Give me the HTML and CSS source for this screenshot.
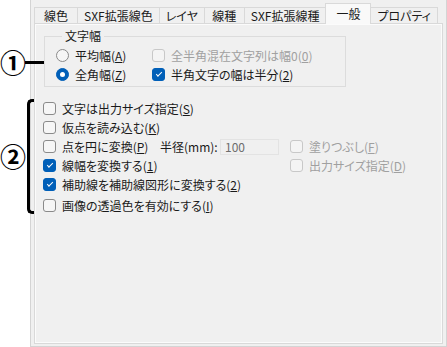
FILE: index.html
```html
<!DOCTYPE html>
<html lang="ja">
<head>
  <meta charset="UTF-8" />
  <title>一般設定</title>
  <link rel="stylesheet" href="styles.css">
</head>
<body>

<div class="screen">
  <div class="note note-one">
    <span class="num">①</span>
    <span class="leader"></span>
  </div>
  <div class="note note-two">
    <span class="num">②</span>
    <span class="bracket"></span>
  </div>

  <div class="dialog">
    <div class="tabs">
      <div class="tab first">線色</div>
      <div class="tab">SXF拡張線色</div>
      <div class="tab">レイヤ</div>
      <div class="tab">線種</div>
      <div class="tab">SXF拡張線種</div>
      <div class="tab active">一般</div>
      <div class="tab">プロパティ</div>
    </div>

    <div class="panel">
      <fieldset class="group">
        <legend>文字幅</legend>
        <div class="radios">
          <label class="opt"><span class="radio"></span><span>平均幅(<u>A</u>)</span></label>
          <label class="opt disabled"><span class="box"></span><span>全半角混在文字列は幅0(<u>0</u>)</span></label>
          <label class="opt"><span class="radio on"></span><span>全角幅(<u>Z</u>)</span></label>
          <label class="opt"><span class="box on"></span><span>半角文字の幅は半分(<u>2</u>)</span></label>
        </div>
      </fieldset>

      <div class="options">
        <label class="opt wide"><span class="box"></span><span>文字は出力サイズ指定(<u>S</u>)</span></label>
        <label class="opt wide"><span class="box"></span><span>仮点を読み込む(<u>K</u>)</span></label>

        <label class="opt"><span class="box"></span><span>点を円に変換(<u>P</u>)</span></label>
        <span class="field-label">半径(mm):</span>
        <span class="input">100</span>
        <label class="opt disabled"><span class="box"></span><span>塗りつぶし(<u>F</u>)</span></label>

        <label class="opt"><span class="box on"></span><span>線幅を変換する(<u>1</u>)</span></label>
        <label class="opt disabled side"><span class="box"></span><span>出力サイズ指定(<u>D</u>)</span></label>

        <label class="opt wide"><span class="box on"></span><span>補助線を補助線図形に変換する(<u>2</u>)</span></label>
        <label class="opt wide last"><span class="box"></span><span>画像の透過色を有効にする(<u>I</u>)</span></label>
      </div>
    </div>
  </div>
</div>

</body>
</html>
```
FILE: styles.css
```css
* {
  box-sizing: border-box;
}

body {
  margin: 0;
  background: #fff;
  font-family: "Noto Sans CJK JP", sans-serif;
  font-size: 12px;
  font-feature-settings: "palt";
  color: #1a1a1a;
}

.screen {
  position: relative;
  width: 447px;
  height: 347px;
}

/* callouts drawn over the dialog */
.note {
  position: absolute;
  left: 0;
}

.num {
  position: absolute;
  left: 0;
  font-size: 26px;
  font-weight: bold;
  line-height: 1;
  color: #000;
}

.note-one {
  top: 49px;
}

.leader {
  position: absolute;
  left: 25px;
  top: 12px;
  width: 19px;
  height: 3px;
  background: #000;
}

.note-two {
  top: 99px;
}

.note-two .num {
  top: 44px;
}

.bracket {
  position: absolute;
  left: 27px;
  top: 0;
  width: 7px;
  height: 115px;
  border: 3px solid #000;
  border-right: none;
  border-radius: 5px 0 0 5px;
}

/* dialog */
.dialog {
  margin-left: 30px;
  height: 347px;
  background: #f0f0f0;
  border-left: 1px solid #d4d4d4;
  border-right: 1px solid #d4d4d4;
  border-bottom: 1px solid #d4d4d4;
  padding: 3px 3px 2px 3px;
  display: flex;
  flex-direction: column;
}

.tabs {
  display: flex;
  align-items: flex-end;
  height: 20px;
  position: relative;
  z-index: 1;
}

.tab {
  height: 16px;
  min-width: 41px;
  line-height: 15px;
  padding: 0 6px;
  margin-right: -1px;
  border: 1px solid #d9d9d9;
  border-bottom: none;
  background: #f0f0f0;
  text-align: center;
  white-space: nowrap;
}

.tab.first {
  min-width: 44px;
}

.tab.active {
  height: 21px;
  min-width: 46px;
  line-height: 19px;
  margin-bottom: -1px;
  background: #f9f9f9;
  position: relative;
}

.panel {
  flex: 1;
  border: 1px solid #d9d9d9;
  box-shadow: inset 0 0 0 1px #fbfbfb;
  padding: 4px 0 0 8px;
}

.group {
  width: 302px;
  margin: 0 0 0 1px;
  padding: 2px 0 2px 11px;
  border: 1px solid #dcdcdc;
}

.group legend {
  margin-left: 6px;
  padding: 0 3px;
  line-height: 16px;
}

.radios {
  display: grid;
  grid-template-columns: 96px auto;
  grid-auto-rows: 19px;
}

.options {
  margin-top: 12px;
  display: grid;
  grid-template-columns: 117px 60px 70px 1fr;
  grid-auto-rows: 19px;
}

.opt {
  display: flex;
  align-items: center;
  gap: 6px;
  white-space: nowrap;
}

.opt.wide {
  grid-column: 1 / -1;
}

.opt.side {
  grid-column: 4;
}

.opt.last {
  margin-top: 3px;
}

.opt.disabled {
  color: #a0a0a0;
}

.field-label {
  display: flex;
  align-items: center;
}

.input {
  align-self: center;
  width: 59px;
  height: 16px;
  line-height: 14px;
  padding-left: 4px;
  border: 1px solid #e3e3e3;
  background: #f0f0f0;
  color: #6d6d6d;
}

/* check boxes and radios */
.box,
.radio {
  flex: none;
  width: 13px;
  height: 13px;
  border: 1px solid #8a8a8a;
  background: #f6f6f6;
  position: relative;
}

.box {
  border-radius: 3px;
}

.radio {
  border-radius: 50%;
}

.disabled .box {
  border-color: #c8c8c8;
  background: #f4f4f4;
}

.box.on,
.radio.on {
  border-color: #005fb8;
  background: #005fb8;
}

.box.on::after {
  content: "";
  position: absolute;
  left: 3px;
  top: 3px;
  width: 5px;
  height: 2px;
  border-left: 1px solid #fff;
  border-bottom: 1px solid #fff;
  transform: rotate(-45deg);
}

.radio.on::after {
  content: "";
  position: absolute;
  left: 3px;
  top: 3px;
  width: 5px;
  height: 5px;
  border-radius: 50%;
  background: #fff;
}
```
